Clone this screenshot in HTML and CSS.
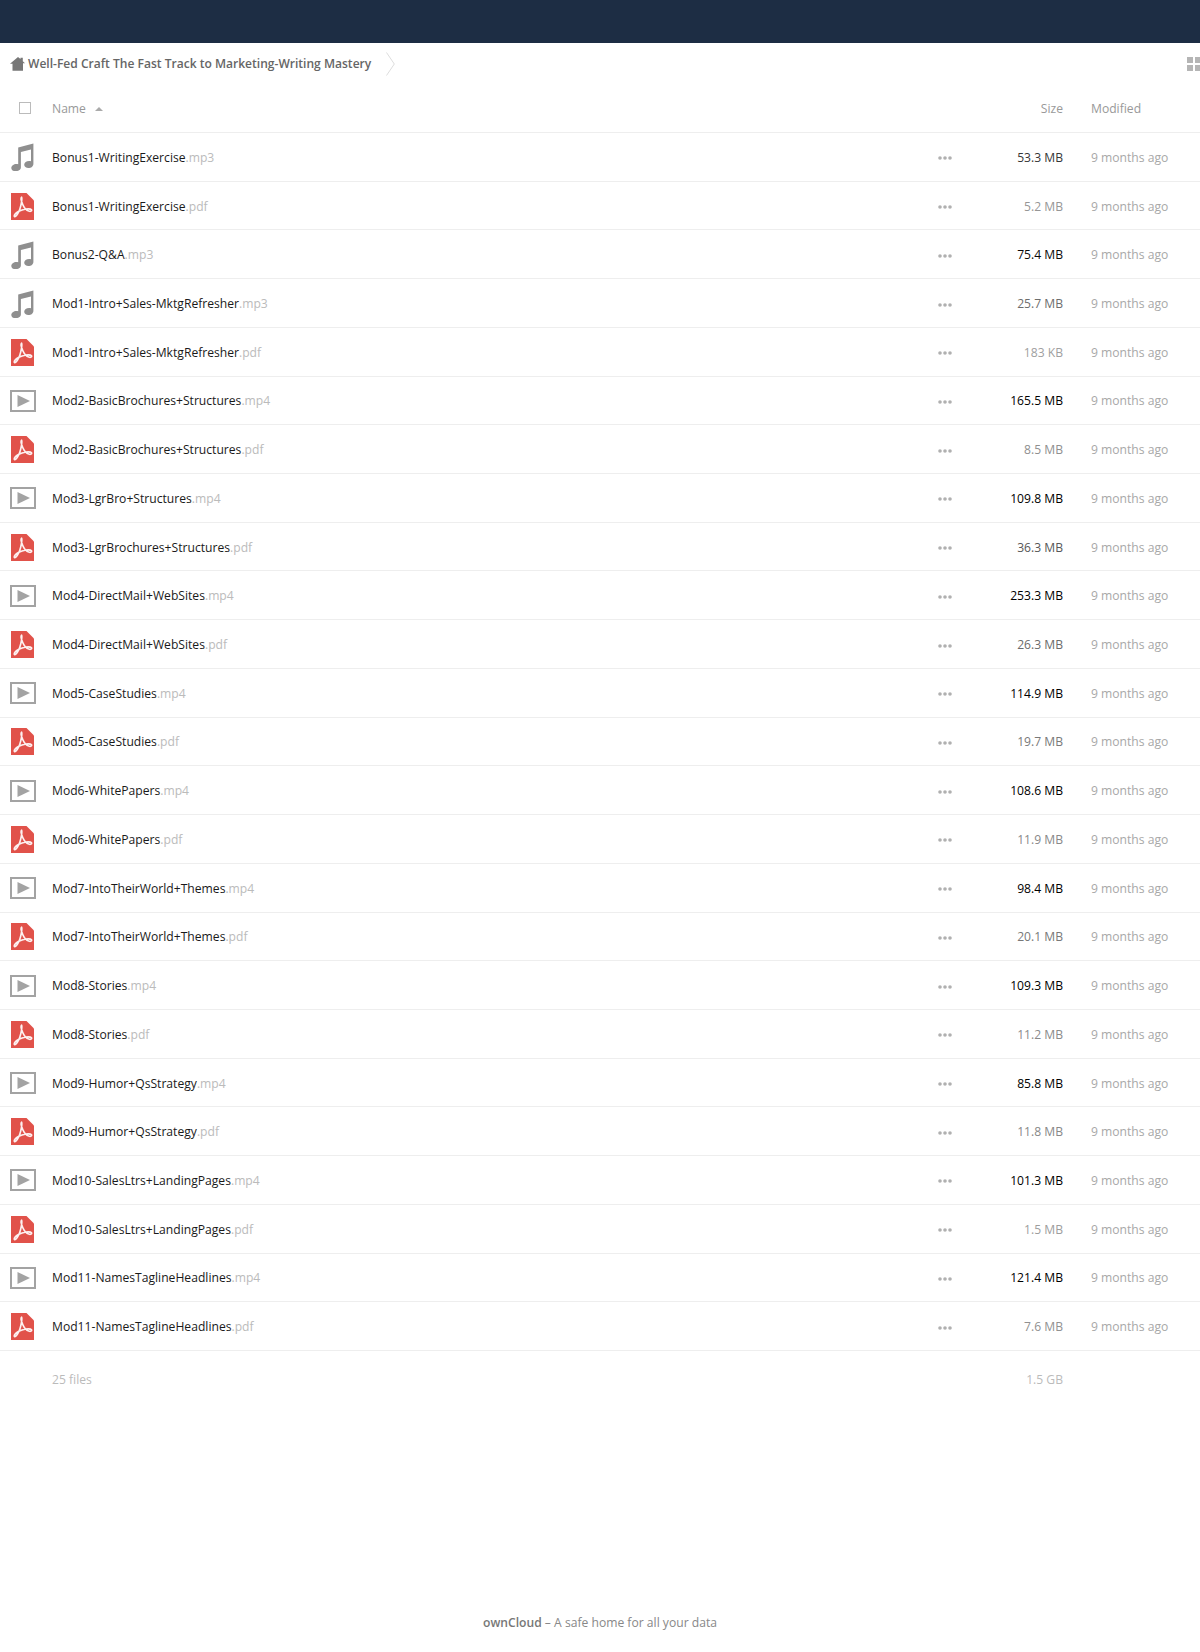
FILE: index.html
```html
<!DOCTYPE html>
<html lang="en">
<head>
<meta charset="utf-8">
<title>Well-Fed Craft The Fast Track to Marketing-Writing Mastery - ownCloud</title>
<link rel="stylesheet" href="styles.css">
</head>
<body>
<svg class="defs" width="0" height="0" aria-hidden="true">
  <symbol id="i-audio" viewBox="0 0 24 28">
    <path fill="#8f8f8f" d="M8.200 4.600 23.400.6v20.100c0 2.500-2.300 4.400-5 4.400-2.400 0-4.200-1.400-4.200-3.300 0-2.100 2.200-3.800 4.900-3.800.7 0 1.300.1 1.900.3V6.600L10.900 9v15.400c0 2.100-2.400 3.800-5.200 3.800-2.500 0-4.400-1.400-4.400-3.300 0-2.300 2.400-4 5.100-4 .6 0 1.200.1 1.800.3z"/>
  </symbol>
  <symbol id="i-pdf" viewBox="0 0 23 27">
    <path fill="#e1524a" d="M0 0h15.500L23 7.500V27H0z"/>
    <path fill="none" stroke="#fff" stroke-opacity=".92" stroke-width="1.600" stroke-linejoin="round" d="M10.600 4.200c-1.300 1 .3 5.500 1.300 7.600 1.100 2.400 3.700 5.500 5.800 6.300 2 .7 3.500-.3 2.800-1.300-.9-1.200-5.800-.9-9.300.1-3.600 1-7 3.600-7.800 5.200-.7 1.500.4 2 1.400 1 1.900-1.800 4.200-7.100 5-10.400.7-3 1.400-7.400.8-8.500z"/>
  </symbol>
  <symbol id="i-video" viewBox="0 0 26 22">
    <rect x="1" y="1" width="24" height="20" fill="#fff" stroke="#a3a3a3" stroke-width="2"/>
    <path fill="#a3a3a3" d="M7.500 5 20 11 7.500 17z"/>
  </symbol>
  <symbol id="i-more" viewBox="0 0 14 4">
    <circle cx="2" cy="2" r="1.800" fill="#b0b0b0"/>
    <circle cx="7" cy="2" r="1.800" fill="#b0b0b0"/>
    <circle cx="12" cy="2" r="1.800" fill="#b0b0b0"/>
  </symbol>
</svg>

<header class="topbar"></header>

<nav class="controls">
  <svg class="home" viewBox="0 0 15 14" aria-hidden="true"><path fill="#777" d="M8 0l2.500 2V.8h2.300v3.400L15 6.200h-2v7.600H2.500V6.800H0z"/></svg>
  <span class="crumb">Well-Fed Craft The Fast Track to Marketing-Writing Mastery</span>
  <svg class="chevron" viewBox="0 0 9 24" aria-hidden="true"><path fill="none" stroke="#ddd" d="M.5.500 8.300 12 .5 23.500"/></svg>
  <div class="views" aria-hidden="true"><i></i><i></i><i></i><i></i></div>
</nav>

<main class="files">
  <div class="row head">
    <span class="check"></span>
    <span class="name-head">Name<i class="sort"></i></span>
    <span class="size">Size</span>
    <span class="date">Modified</span>
  </div>
  <div class="row file"><svg class="icon audio"><use href="#i-audio"/></svg><span class="name">Bonus1-WritingExercise<em>.mp3</em></span><svg class="more"><use href="#i-more"/></svg><span class="size" style="color:rgb(54,54,54)">53.3 MB</span><span class="date">9 months ago</span></div>
  <div class="row file"><svg class="icon pdf"><use href="#i-pdf"/></svg><span class="name">Bonus1-WritingExercise<em>.pdf</em></span><svg class="more"><use href="#i-more"/></svg><span class="size" style="color:rgb(150,150,150)">5.2 MB</span><span class="date">9 months ago</span></div>
  <div class="row file"><svg class="icon audio"><use href="#i-audio"/></svg><span class="name">Bonus2-Q&amp;A<em>.mp3</em></span><svg class="more"><use href="#i-more"/></svg><span class="size" style="color:rgb(9,9,9)">75.4 MB</span><span class="date">9 months ago</span></div>
  <div class="row file"><svg class="icon audio"><use href="#i-audio"/></svg><span class="name">Mod1-Intro+Sales-MktgRefresher<em>.mp3</em></span><svg class="more"><use href="#i-more"/></svg><span class="size" style="color:rgb(109,109,109)">25.7 MB</span><span class="date">9 months ago</span></div>
  <div class="row file"><svg class="icon pdf"><use href="#i-pdf"/></svg><span class="name">Mod1-Intro+Sales-MktgRefresher<em>.pdf</em></span><svg class="more"><use href="#i-more"/></svg><span class="size" style="color:rgb(160,160,160)">183 KB</span><span class="date">9 months ago</span></div>
  <div class="row file"><svg class="icon video"><use href="#i-video"/></svg><span class="name">Mod2-BasicBrochures+Structures<em>.mp4</em></span><svg class="more"><use href="#i-more"/></svg><span class="size" style="color:rgb(0,0,0)">165.5 MB</span><span class="date">9 months ago</span></div>
  <div class="row file"><svg class="icon pdf"><use href="#i-pdf"/></svg><span class="name">Mod2-BasicBrochures+Structures<em>.pdf</em></span><svg class="more"><use href="#i-more"/></svg><span class="size" style="color:rgb(143,143,143)">8.5 MB</span><span class="date">9 months ago</span></div>
  <div class="row file"><svg class="icon video"><use href="#i-video"/></svg><span class="name">Mod3-LgrBro+Structures<em>.mp4</em></span><svg class="more"><use href="#i-more"/></svg><span class="size" style="color:rgb(0,0,0)">109.8 MB</span><span class="date">9 months ago</span></div>
  <div class="row file"><svg class="icon pdf"><use href="#i-pdf"/></svg><span class="name">Mod3-LgrBrochures+Structures<em>.pdf</em></span><svg class="more"><use href="#i-more"/></svg><span class="size" style="color:rgb(87,87,87)">36.3 MB</span><span class="date">9 months ago</span></div>
  <div class="row file"><svg class="icon video"><use href="#i-video"/></svg><span class="name">Mod4-DirectMail+WebSites<em>.mp4</em></span><svg class="more"><use href="#i-more"/></svg><span class="size" style="color:rgb(0,0,0)">253.3 MB</span><span class="date">9 months ago</span></div>
  <div class="row file"><svg class="icon pdf"><use href="#i-pdf"/></svg><span class="name">Mod4-DirectMail+WebSites<em>.pdf</em></span><svg class="more"><use href="#i-more"/></svg><span class="size" style="color:rgb(107,107,107)">26.3 MB</span><span class="date">9 months ago</span></div>
  <div class="row file"><svg class="icon video"><use href="#i-video"/></svg><span class="name">Mod5-CaseStudies<em>.mp4</em></span><svg class="more"><use href="#i-more"/></svg><span class="size" style="color:rgb(0,0,0)">114.9 MB</span><span class="date">9 months ago</span></div>
  <div class="row file"><svg class="icon pdf"><use href="#i-pdf"/></svg><span class="name">Mod5-CaseStudies<em>.pdf</em></span><svg class="more"><use href="#i-more"/></svg><span class="size" style="color:rgb(121,121,121)">19.7 MB</span><span class="date">9 months ago</span></div>
  <div class="row file"><svg class="icon video"><use href="#i-video"/></svg><span class="name">Mod6-WhitePapers<em>.mp4</em></span><svg class="more"><use href="#i-more"/></svg><span class="size" style="color:rgb(0,0,0)">108.6 MB</span><span class="date">9 months ago</span></div>
  <div class="row file"><svg class="icon pdf"><use href="#i-pdf"/></svg><span class="name">Mod6-WhitePapers<em>.pdf</em></span><svg class="more"><use href="#i-more"/></svg><span class="size" style="color:rgb(136,136,136)">11.9 MB</span><span class="date">9 months ago</span></div>
  <div class="row file"><svg class="icon video"><use href="#i-video"/></svg><span class="name">Mod7-IntoTheirWorld+Themes<em>.mp4</em></span><svg class="more"><use href="#i-more"/></svg><span class="size" style="color:rgb(0,0,0)">98.4 MB</span><span class="date">9 months ago</span></div>
  <div class="row file"><svg class="icon pdf"><use href="#i-pdf"/></svg><span class="name">Mod7-IntoTheirWorld+Themes<em>.pdf</em></span><svg class="more"><use href="#i-more"/></svg><span class="size" style="color:rgb(120,120,120)">20.1 MB</span><span class="date">9 months ago</span></div>
  <div class="row file"><svg class="icon video"><use href="#i-video"/></svg><span class="name">Mod8-Stories<em>.mp4</em></span><svg class="more"><use href="#i-more"/></svg><span class="size" style="color:rgb(0,0,0)">109.3 MB</span><span class="date">9 months ago</span></div>
  <div class="row file"><svg class="icon pdf"><use href="#i-pdf"/></svg><span class="name">Mod8-Stories<em>.pdf</em></span><svg class="more"><use href="#i-more"/></svg><span class="size" style="color:rgb(138,138,138)">11.2 MB</span><span class="date">9 months ago</span></div>
  <div class="row file"><svg class="icon video"><use href="#i-video"/></svg><span class="name">Mod9-Humor+QsStrategy<em>.mp4</em></span><svg class="more"><use href="#i-more"/></svg><span class="size" style="color:rgb(0,0,0)">85.8 MB</span><span class="date">9 months ago</span></div>
  <div class="row file"><svg class="icon pdf"><use href="#i-pdf"/></svg><span class="name">Mod9-Humor+QsStrategy<em>.pdf</em></span><svg class="more"><use href="#i-more"/></svg><span class="size" style="color:rgb(136,136,136)">11.8 MB</span><span class="date">9 months ago</span></div>
  <div class="row file"><svg class="icon video"><use href="#i-video"/></svg><span class="name">Mod10-SalesLtrs+LandingPages<em>.mp4</em></span><svg class="more"><use href="#i-more"/></svg><span class="size" style="color:rgb(0,0,0)">101.3 MB</span><span class="date">9 months ago</span></div>
  <div class="row file"><svg class="icon pdf"><use href="#i-pdf"/></svg><span class="name">Mod10-SalesLtrs+LandingPages<em>.pdf</em></span><svg class="more"><use href="#i-more"/></svg><span class="size" style="color:rgb(157,157,157)">1.5 MB</span><span class="date">9 months ago</span></div>
  <div class="row file"><svg class="icon video"><use href="#i-video"/></svg><span class="name">Mod11-NamesTaglineHeadlines<em>.mp4</em></span><svg class="more"><use href="#i-more"/></svg><span class="size" style="color:rgb(0,0,0)">121.4 MB</span><span class="date">9 months ago</span></div>
  <div class="row file"><svg class="icon pdf"><use href="#i-pdf"/></svg><span class="name">Mod11-NamesTaglineHeadlines<em>.pdf</em></span><svg class="more"><use href="#i-more"/></svg><span class="size" style="color:rgb(145,145,145)">7.6 MB</span><span class="date">9 months ago</span></div>
  <div class="row summary">
    <span class="name">25 files</span>
    <span class="size">1.5 GB</span>
  </div>
</main>

<footer class="footer"><b>ownCloud</b> – A safe home for all your data</footer>
</body>
</html>
```
FILE: styles.css
```css
* { box-sizing: border-box; }
html, body { margin: 0; height: 100%; }
body {
  width: 1200px;
  height: 1652px;
  overflow: hidden;
  display: flex;
  flex-direction: column;
  background: #fff;
  font-family: "Open Sans", sans-serif;
  font-size: 12.13px;
  color: #1a1a1a;
}
.defs { position: absolute; }
.topbar {
  flex: none;
  height: 43px;
  background: #1d2d44;
}
.controls {
  flex: none;
  height: 41px;
  display: flex;
  align-items: center;
  padding-left: 10px;
  position: relative;
}
.home { width: 15px; height: 14px; margin-right: 3px; }
.crumb { font-size: 12.05px; font-weight: 600; color: #666; }
.chevron { width: 9px; height: 24px; margin-left: 15px; }
.views {
  display: grid;
  grid-template-columns: 6px 6px;
  gap: 2px;
  position: absolute;
  right: -1px;
  top: 14px;
}
.views i { width: 6px; height: 6px; background: #b5b5b5; }
.files { flex: none; }
.row {
  display: grid;
  grid-template-columns: 52px 1fr 40px 98px 137px;
  align-items: center;
  border-bottom: 1px solid #eee;
  height: 48.72px;
}
.row.file { padding-top: 1px; }
.row.head { height: 49px; color: #999; }
.icon { justify-self: start; margin-left: 10px; }
.icon.audio { width: 24px; height: 28px; }
.icon.pdf { width: 23px; height: 27px; margin-left: 11px; }
.icon.video { width: 26px; height: 22px; }
.check {
  width: 12px; height: 12px;
  margin-left: 19px;
  border: 1px solid #bbb;
  background: #fff;
}
.name-head { grid-column: 2 / 4; }
.sort {
  display: inline-block;
  width: 0; height: 0;
  margin-left: 9px;
  vertical-align: 2px;
  border: 4px solid transparent;
  border-top-width: 0;
  border-bottom: 4px solid #aaa;
}
.name { white-space: nowrap; }
.name em { font-style: normal; color: #bbb; }
.more {
  width: 14px;
  height: 4px;
  justify-self: center;
  margin-top: 2px;
}
.size { grid-column: 4; text-align: right; }
.date { grid-column: 5; padding-left: 28px; color: #a8a8a8; white-space: nowrap; }
.head .size, .head .date { color: #999; }
.row.summary { border: 0; height: 58px; color: #bbb; }
.summary .name { grid-column: 2; }
.footer {
  position: absolute;
  left: 0; right: 0;
  top: 1614px;
  text-align: center;
  color: #888;
}
.footer b { font-weight: 600; color: #777; }
```
